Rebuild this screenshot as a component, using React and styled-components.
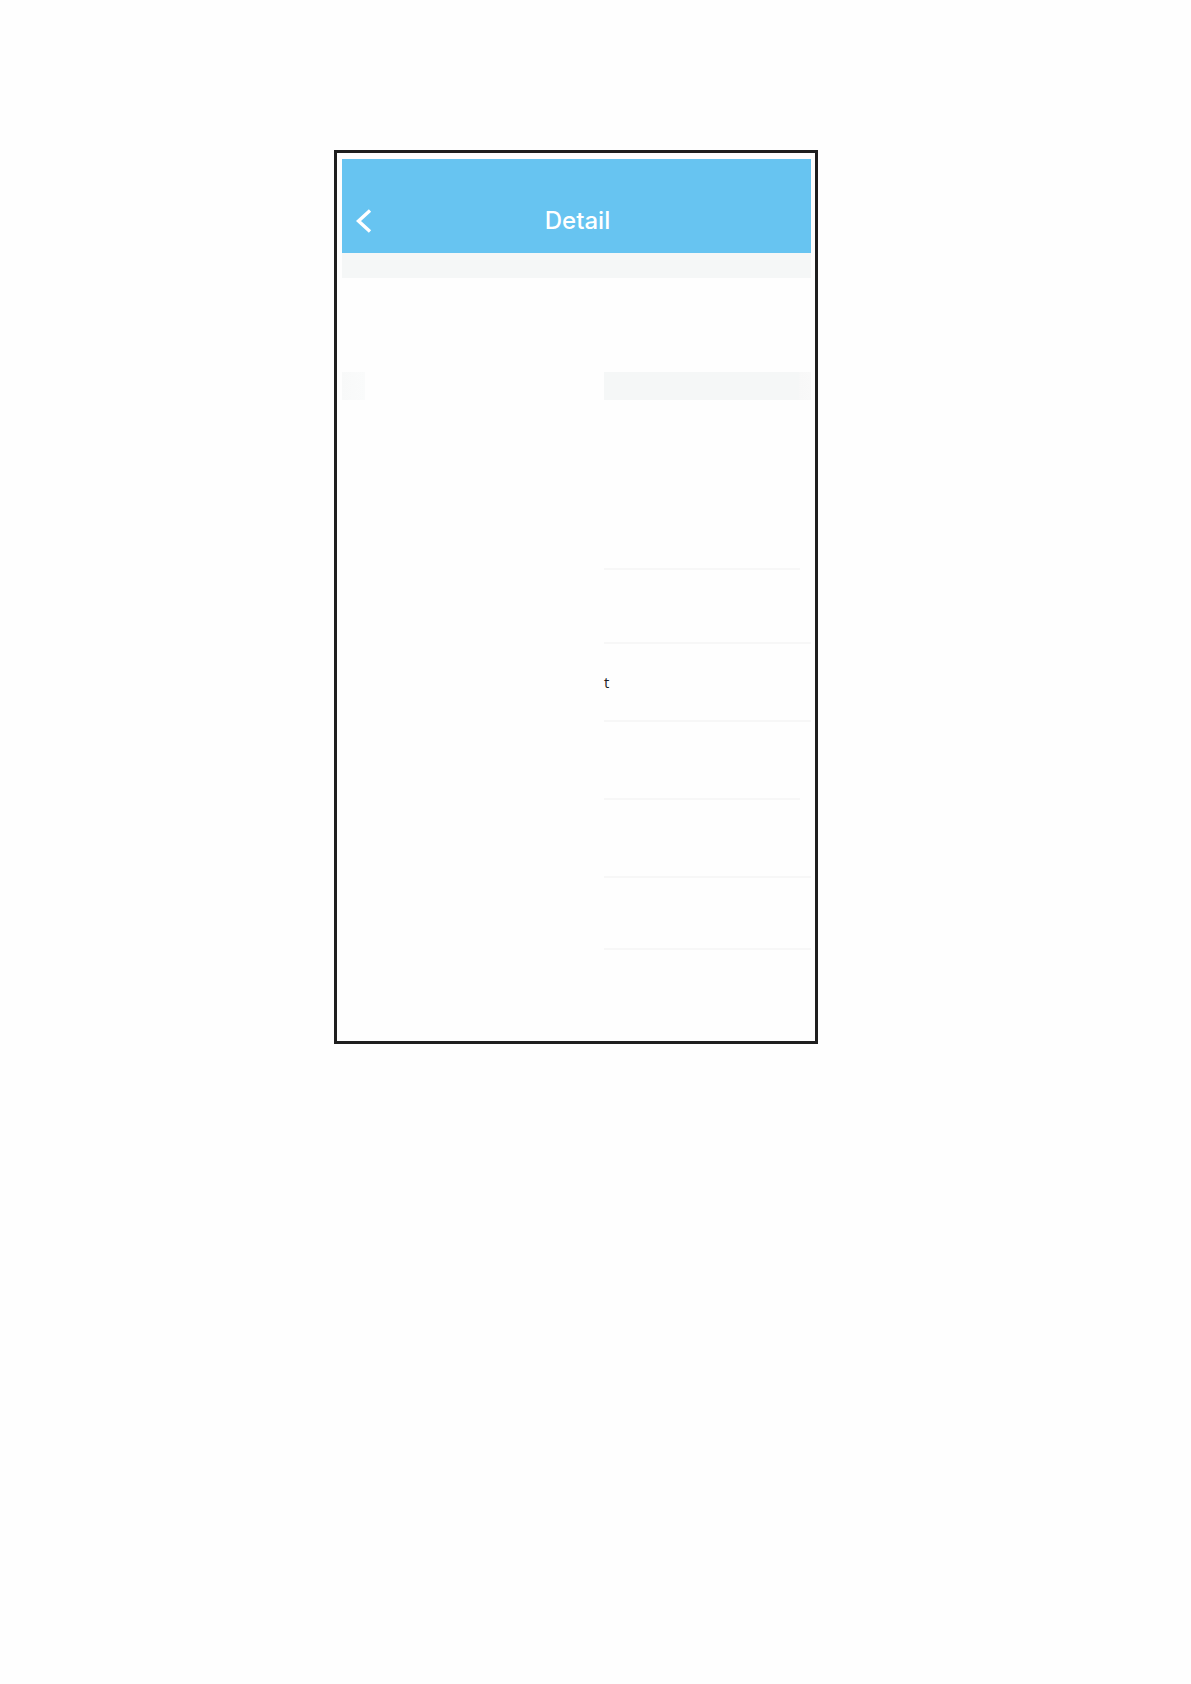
import React from "react";
import styled, { createGlobalStyle } from "styled-components";

const GlobalStyle = createGlobalStyle`
  * {
    box-sizing: border-box;
  }

  body {
    margin: 0;
    background-color: #fefefe;
    font-family: "Open Sans", "Noto Sans", sans-serif;
    color: #1e1e1e;
  }
`;

const Page = styled.div`
  min-height: 100vh;
  padding: 150px 373px 150px 334px;
`;

const Screen = styled.main`
  border: 3px solid #1e1e1e;
  padding: 6px 4px 91px 5px;
`;

const Header = styled.header`
  display: grid;
  grid-template-columns: 48px 1fr 46px;
  align-items: center;
  height: 94px;
  padding-top: 30px;
  background-color: #67c4f1;
  color: white;
`;

const BackButton = styled.button`
  display: flex;
  align-items: center;
  height: 40px;
  padding: 0 0 0 14px;
  border: none;
  background: none;
  color: inherit;
  cursor: pointer;
`;

const Title = styled.h1`
  margin: 0;
  font-family: Inter, "Liberation Sans", sans-serif;
  font-size: 24px;
  font-weight: 500;
  line-height: 32px;
  text-align: center;
`;

const Band = styled.div`
  height: 25px;
  background-color: #f5f7f7;
`;

const Summary = styled.section`
  height: 94px;
`;

const Details = styled.section`
  display: grid;
  grid-template-columns: 262px 1fr;
`;

const LabelMark = styled.div`
  width: 23px;
  height: 28px;
  background: linear-gradient(to right, #f8f9f9, #fafbfb);
`;

const ValueBand = styled.div`
  height: 28px;
  background: linear-gradient(to left, #f9f9f9, #f8f8f8 11px, #f5f7f7 12px);
`;

const List = styled.ul`
  margin: 0;
  padding: 0;
  list-style: none;
`;

const Row = styled.li`
  display: flex;
  align-items: center;
  height: ${(props) => props.$height}px;
  margin-right: ${(props) => (props.$inset ? 11 : 0)}px;
  border-bottom: 2px solid #f7f7f7;
  font-size: 15px;
  line-height: 20px;
`;

const rows = [
  { id: "first", height: 170, inset: true },
  { id: "second", height: 74 },
  { id: "third", height: 78, value: "t" },
  { id: "fourth", height: 78, inset: true },
  { id: "fifth", height: 78 },
  { id: "sixth", height: 72 },
];

const App = () => (
  <>
    <GlobalStyle />
    <Page>
      <Screen>
        <Header>
          <BackButton type="button" aria-label="Back">
            <svg width="16" height="26" viewBox="0 0 16 26" fill="none">
              <path
                d="M14 2.5L2.5 13L14 23.5"
                stroke="currentColor"
                strokeWidth="3.4"
              />
            </svg>
          </BackButton>
          <Title>Detail</Title>
        </Header>
        <Band />
        <Summary />
        <Details>
          <LabelMark />
          <div>
            <ValueBand />
            <List>
              {rows.map((row) => (
                <Row key={row.id} $height={row.height} $inset={row.inset}>
                  {row.value}
                </Row>
              ))}
            </List>
          </div>
        </Details>
      </Screen>
    </Page>
  </>
);

export default App;
